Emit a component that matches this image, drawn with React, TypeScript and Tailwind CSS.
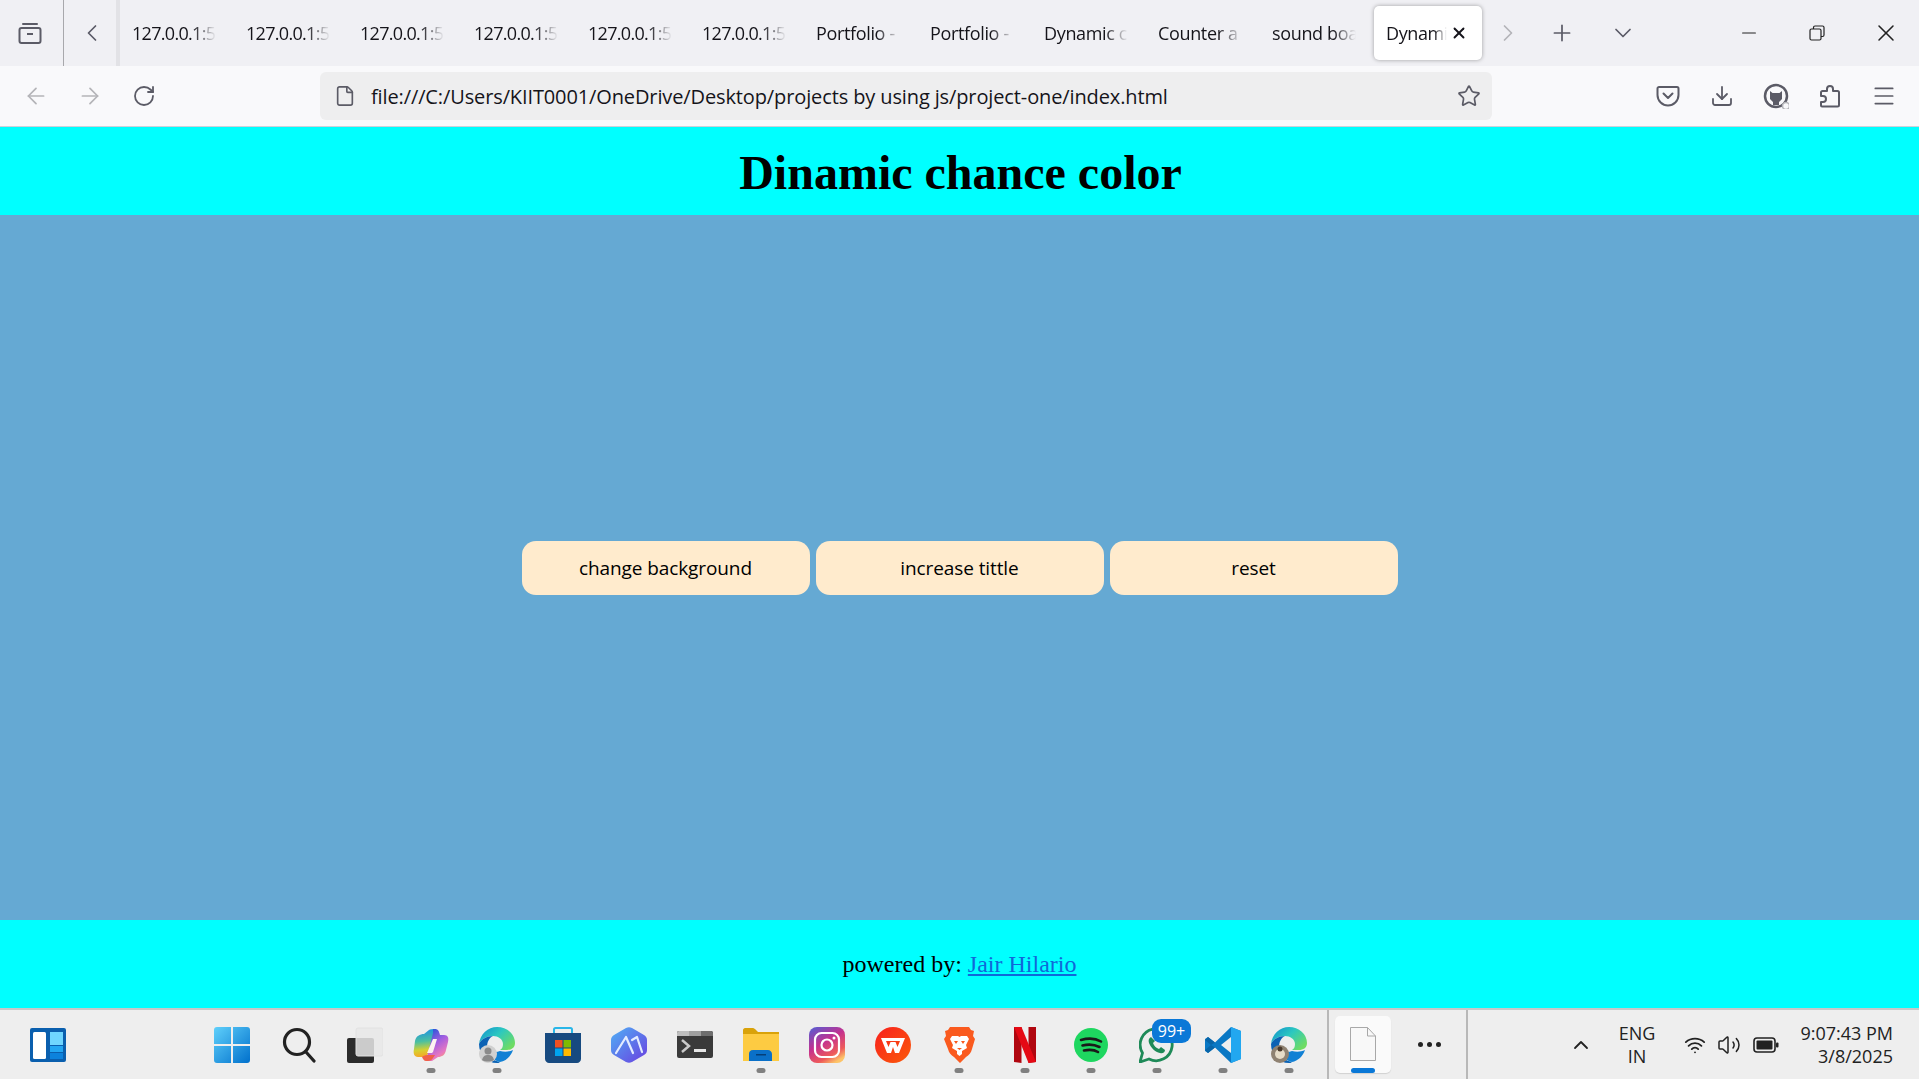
import { ArrowLeft, ArrowRight, ChevronDown, ChevronLeft, ChevronRight, ChevronUp, Download, File, Menu, Minus, Plus, RotateCw, Star, Volume2, Wifi, X } from 'lucide-react'
import type { ReactNode } from 'react'

const chromeFont = "font-['Open_Sans','Noto_Sans',sans-serif]"

const tabs = [
  "127.0.0.1:5", "127.0.0.1:5", "127.0.0.1:5", "127.0.0.1:5", "127.0.0.1:5", "127.0.0.1:5",
  "Portfolio -", "Portfolio -", "Dynamic c", "Counter a", "sound boa",
]

function CopilotIcon() {
  return (
    <svg width="36" height="36" viewBox="0 0 36 36">
      <defs>
        <linearGradient id="cop1" x1="0.3" y1="0" x2="0.4" y2="1">
          <stop offset="0" stopColor="#1a8fe8" />
          <stop offset="0.45" stopColor="#4cc0a0" />
          <stop offset="0.75" stopColor="#d6d030" />
          <stop offset="1" stopColor="#f7a525" />
        </linearGradient>
        <linearGradient id="cop2" x1="0.2" y1="0" x2="0.7" y2="1">
          <stop offset="0" stopColor="#1f55d8" />
          <stop offset="0.45" stopColor="#a45ee0" />
          <stop offset="0.8" stopColor="#e878c0" />
          <stop offset="1" stopColor="#f8a060" />
        </linearGradient>
      </defs>
      <path d="M2 14C3 9 7 7 11 7l5-4c1-1 3-1 7-1L15 27c-1 2-3 3-5 3H5c-4 0-5-4-4-8z" fill="url(#cop1)" />
      <path d="M20 2h2c3 0 4 2 5 6h4c4 0 5 3 4 7l-2 8c-1 5-4 7-8 7l-6 4h-6l7-28z" fill="url(#cop2)" />
      <path d="M9 30c1-1 3-2 5-2h8l-2 3c-1 2-3 3-5 3h-2c-2 0-3-2-4-4z" fill="#f0604a" />
      <path d="M20 12h4l-4 13c-1 1-1 1-2 1h-4z" fill="#fdf3f0" />
    </svg>
  )
}

function EdgeIcon({ id, children }: { id: string; children: ReactNode }) {
  return (
    <svg width="36" height="36" viewBox="0 0 36 36">
      <defs>
        <linearGradient id={id} x1="0" y1="0" x2="1" y2="0.7">
          <stop offset="0" stopColor="#0f8ccf" />
          <stop offset="0.5" stopColor="#2cc8c0" />
          <stop offset="1" stopColor="#6fdc62" />
        </linearGradient>
      </defs>
      <path d="M0 17C1 7 9 0 18 0c10 0 18 7 18 16 0 5-4 7-8 7h-7c2-1 3-3 3-6 0-5-5-8-10-8C8 9 2 12 0 17z" fill={`url(#${id})`} />
      <path d="M0 17c2-5 8-8 14-8-4 2-6 6-6 11 0 7 5 14 13 15-1 1-2 1-3 1C8 36 0 28 0 17z" fill="#0c62b4" />
      <path d="M21 24c4 1 9 1 13-1-2 6-7 11-13 12-6-1-10-6-11-12 3 2 7 3 11 1z" fill="#1180d4" />
      {children}
    </svg>
  )
}

function StoreIcon() {
  return (
    <svg width="36" height="36" viewBox="0 0 36 36">
      <path d="M9 7V2.5C9 1.5 9.5 1 10.5 1h15c1 0 1.500.5 1.500 1.500V7" fill="none" stroke="#29b6e8" strokeWidth="2" />
      <path d="M0 6h36v26c0 2-2 4-4 4H4c-2 0-4-2-4-4z" fill="#174a80" />
      <rect x="10" y="13" width="7.5" height="7.5" fill="#f25022" />
      <rect x="18.5" y="13" width="7.5" height="7.5" fill="#7fba00" />
      <rect x="10" y="21.5" width="7.5" height="7.5" fill="#00a4ef" />
      <rect x="18.5" y="21.5" width="7.5" height="7.5" fill="#ffb900" />
    </svg>
  )
}

function ArcIcon() {
  return (
    <svg width="36" height="36" viewBox="0 0 36 36">
      <defs>
        <linearGradient id="arc" x1="0" y1="0" x2="1" y2="1">
          <stop offset="0" stopColor="#4fb0f5" />
          <stop offset="1" stopColor="#6a3fe0" />
        </linearGradient>
      </defs>
      <path d="M15 1c2-1 4-1 6 0l12 7c2 1 3 3 3 5v10c0 2-1 4-3 5l-12 7c-2 1-4 1-6 0L3 28c-2-1-3-3-3-5V13c0-2 1-4 3-5z" fill="url(#arc)" />
      <path d="M5 26 15 10l7 16M21 13l5-3 5 15" fill="none" stroke="#e3ecff" strokeWidth="2.2" strokeLinecap="round" strokeLinejoin="round" />
    </svg>
  )
}

function TerminalIcon() {
  return (
    <svg width="36" height="28" viewBox="0 0 36 28">
      <rect width="36" height="27" rx="2" fill="#3a3a3a" />
      <path d="M2 0h10v5H0V2c0-1 1-2 2-2z" fill="#bdbdbd" />
      <rect x="12" width="12" height="5" fill="#a0a0a0" />
      <path d="M24 0h10c1 0 2 1 2 2v3H24z" fill="#6e6e6e" />
      <path d="m5 9 7 6-7 6" fill="none" stroke="#c9c9c9" strokeWidth="2.5" />
      <rect x="17" y="18" width="12" height="3" fill="#e6e6e6" />
    </svg>
  )
}

function FolderIcon() {
  return (
    <svg width="36" height="36" viewBox="0 0 36 36">
      <path d="M0 3c0-1 1-2 2-2h8c1 0 2 1 3 2l2 2h21v4H0z" fill="#d9a20a" />
      <path d="M0 7h36v27H0z" fill="#fdcb42" />
      <path d="M6 34v-7c0-2 1-4 4-4h15c2 0 4 2 4 4v7z" fill="#0a70c8" />
      <rect x="13" y="27" width="10" height="1.5" fill="#053f78" />
    </svg>
  )
}

function InstagramIcon() {
  return (
    <svg width="36" height="36" viewBox="0 0 36 36">
      <defs>
        <linearGradient id="ig" x1="0.1" y1="0" x2="0.7" y2="1">
          <stop offset="0" stopColor="#5a5ad0" />
          <stop offset="0.45" stopColor="#c4318f" />
          <stop offset="0.8" stopColor="#ee5a5a" />
          <stop offset="1" stopColor="#fdc468" />
        </linearGradient>
      </defs>
      <rect width="36" height="36" rx="8" fill="url(#ig)" />
      <rect x="6" y="6" width="24" height="24" rx="6.5" fill="none" stroke="#fff" strokeWidth="2.2" />
      <circle cx="18" cy="18" r="5.5" fill="none" stroke="#fff" strokeWidth="2.2" />
      <circle cx="25" cy="11" r="1.5" fill="#fff" />
    </svg>
  )
}

function WpsIcon() {
  return (
    <svg width="36" height="36" viewBox="0 0 36 36">
      <defs>
        <linearGradient id="wps" x1="0" y1="0" x2="1" y2="1">
          <stop offset="0" stopColor="#f8201e" />
          <stop offset="1" stopColor="#fb5a0a" />
        </linearGradient>
      </defs>
      <circle cx="18" cy="18" r="18" fill="url(#wps)" />
      <path d="M6 11h24l-6 15h-4l-2-6-2 6h-4zm5 3 2.5 6 2-5h5l2 5 2.5-6z" fill="#fff" fillRule="evenodd" />
    </svg>
  )
}

function BraveIcon() {
  return (
    <svg width="31" height="36" viewBox="0 0 31 36">
      <path d="M6 0h19l2 3 3 1-1 5 2 3-3 10c-1 4-3 6-6 8l-6 6-6-6c-3-2-5-4-6-8L0 12l2-3-1-5 3-1z" fill="#fa5a1e" />
      <path d="M8 9h6l1.5 1L17 9h6l2 3-3 6 1 3-5 3v3l-2.5 2L13 27v-3l-5-3 1-3-3-6z" fill="#fff" />
      <path d="M10 14h4l-2 3zM21 14h-4l2 3zM13 21h5l-2.5 2z" fill="#fa5a1e" />
    </svg>
  )
}

function NetflixIcon() {
  return (
    <svg width="22" height="36" viewBox="0 0 22 36">
      <path d="M0 0h7.5v36L0 35z" fill="#b0060f" />
      <path d="M14.5 0H22v35l-7.5 1z" fill="#b0060f" />
      <path d="M0 0h7.5L22 35l-7.5 1z" fill="#e50914" />
    </svg>
  )
}

function SpotifyIcon() {
  return (
    <svg width="34" height="34" viewBox="0 0 34 34">
      <circle cx="17" cy="17" r="17" fill="#1ed760" />
      <path d="M7 12c7-2 14-2 20 1.500M8.500 17.500c6-1.500 12-1 17 1.500M10 22.500c5-1 10-1 14 1.500" fill="none" stroke="#1a1a1a" strokeWidth="2.6" strokeLinecap="round" />
    </svg>
  )
}

function WhatsappIcon() {
  return (
    <svg width="36" height="36" viewBox="0 0 36 36">
      <path d="M1 35l2.500-9A16 16 0 1 1 10 32z" fill="none" stroke="#1e8a58" strokeWidth="2.8" strokeLinejoin="round" />
      <path d="M12 10c-2 1-3 3-2 6 2 5 6 9 11 10 3 1 5-1 5-3l-4-3-2 2c-3-1-5-3-6-6l2-2z" fill="#1e8a58" />
    </svg>
  )
}

function VscodeIcon() {
  return (
    <svg width="36" height="36" viewBox="0 0 36 36">
      <path d="M26 0 10 15.500 3 10 0 12v12l3 2 7-5.500L26 36l10-4V4zM26 10v16l-10-8z" fill="#0a78c4" fillRule="evenodd" />
      <path d="M26 0l10 4v28l-10 4z" fill="#22a7f0" />
      <path d="M3 10l7 5.500L6 18 0 13zM6 18l4 2.500L3 26l-3-3z" fill="#0865a8" />
    </svg>
  )
}

function TaskSlot({ dot, children }: { dot?: boolean; children: ReactNode }) {
  return (
    <div className="relative flex h-full w-[66px] shrink-0 items-center justify-center">
      {children}
      {dot && <div className="absolute bottom-[6px] left-1/2 h-[5px] w-[9px] -translate-x-1/2 rounded-full bg-[#808080]" />}
    </div>
  )
}

export default function App() {
  return (
    <div className="flex h-[1079px] w-full flex-col overflow-hidden bg-white">
      {/* Tab strip */}
      <div className={`flex h-[66px] shrink-0 items-center bg-[#f0f0f4] text-[18px] text-[#15141a] ${chromeFont}`}>
        <div className="flex h-full w-[64px] shrink-0 items-center justify-center border-r border-[#a8a8ac] pr-[4px]">
          <svg width="24" height="24" viewBox="0 0 24 24" fill="none" stroke="#5b5b66" strokeWidth="2">
            <path d="M5 3h14" strokeLinecap="round" />
            <rect x="1.5" y="7" width="21" height="15" rx="2" />
            <path d="M9 13h6" />
          </svg>
        </div>
        <div className="flex h-full w-[56px] shrink-0 items-center justify-center border-r-[4px] border-[#e2e2e6] pl-[3px]">
          <ChevronLeft size={28} strokeWidth={1.5} color="#5b5b66" />
        </div>
        {tabs.map((t, i) => (
          <div key={i} className="flex h-full w-[114px] shrink-0 items-center px-3">
            <span className={`w-[84px] overflow-hidden whitespace-nowrap [mask-image:linear-gradient(to_right,black_72%,transparent_100%)] ${i < 6 ? "tracking-[-0.7px]" : "tracking-[-0.35px]"}`}>{t}</span>
          </div>
        ))}
        <div className="flex h-[54px] w-[108px] shrink-0 items-center justify-between rounded-[5px] bg-white pl-3 pr-[14px] shadow-[0_0_4px_rgba(0,0,0,0.35)]">
          <span className="w-[64px] overflow-hidden whitespace-nowrap tracking-[-0.4px] [mask-image:linear-gradient(to_right,black_75%,transparent_95%)]">Dynami</span>
          <X size={18} strokeWidth={2.5} color="#15141a" />
        </div>
        <div className="flex w-[42px] shrink-0 justify-end pr-[2px]">
          <ChevronRight size={28} strokeWidth={1.5} color="#b4b4b8" />
        </div>
        <div className="flex w-[74px] shrink-0 justify-center pl-[2px]">
          <Plus size={26} strokeWidth={1.6} color="#5b5b66" />
        </div>
        <div className="flex w-[50px] shrink-0 justify-center">
          <ChevronDown size={28} strokeWidth={1.5} color="#5b5b66" />
        </div>
        <div className="flex w-[112px] shrink-0 justify-end">
          <Minus size={22} strokeWidth={1.2} color="#222" />
        </div>
        <div className="flex w-[80px] shrink-0 justify-end">
          <svg width="22" height="22" viewBox="0 0 22 22" fill="none" stroke="#222" strokeWidth="1.2" className="mr-[12px]">
            <rect x="4" y="7" width="11" height="11" rx="1.5" />
            <path d="M7.5 7V5.5C7.5 4.500 8 4 9 4h7.500C17.500 4 18 4.500 18 5.500V13c0 1-.5 1.500-1.500 1.500H15" />
          </svg>
        </div>
        <div className="flex w-[70px] shrink-0 justify-end pr-[10px]">
          <X size={28} strokeWidth={1.3} color="#222" />
        </div>
      </div>

      {/* Toolbar */}
      <div className={`flex h-[61px] shrink-0 items-center border-b border-[#cfcfd8] bg-[#f9f9fb] ${chromeFont}`}>
        <div className="flex w-[72px] shrink-0 justify-center"><ArrowLeft size={26} strokeWidth={1.6} color="#b4b4b8" /></div>
        <div className="flex w-[36px] shrink-0 justify-center"><ArrowRight size={26} strokeWidth={1.6} color="#b4b4b8" /></div>
        <div className="flex w-[72px] shrink-0 justify-center"><RotateCw size={24} strokeWidth={1.8} color="#5b5b66" /></div>
        <div className="ml-[140px] flex h-[48px] w-[1172px] shrink-0 items-center rounded-[6px] bg-[#eeeeef] pl-[14px] pr-[11px]">
          <File size={22} strokeWidth={1.8} color="#5b5b66" />
          <span className="ml-[15px] flex-1 whitespace-nowrap pt-[1px] text-[20px] tracking-[-0.12px] text-[#15141a]">file:///C:/Users/KIIT0001/OneDrive/Desktop/projects by using js/project-one/index.html</span>
          <Star size={24} strokeWidth={1.7} color="#5b5b66" />
        </div>
        <div className="ml-[149px] flex w-[54px] shrink-0 justify-center">
          <svg width="24" height="24" viewBox="0 0 24 24" fill="none" stroke="#5b5b66" strokeWidth="2" strokeLinecap="round" strokeLinejoin="round">
            <path d="M3 3h18c.8 0 1.5.7 1.5 1.5V11c0 6-5 10.5-10.5 10.5S1.500 17 1.500 11V4.500C1.500 3.700 2.200 3 3 3z" />
            <path d="m7.500 9.500 4.500 4.500 4.500-4.500" />
          </svg>
        </div>
        <div className="flex w-[54px] shrink-0 justify-center"><Download size={24} strokeWidth={1.8} color="#5b5b66" /></div>
        <div className="relative flex w-[54px] shrink-0 justify-center">
          <svg width="26" height="26" viewBox="0 0 26 26" fill="none">
            <circle cx="13" cy="13" r="11" stroke="#5b5b66" strokeWidth="2.5" />
            <path d="M7 8l2.500 2h7L19 8v8l-3 3v3h-6v-3l-3-3z" fill="#5b5b66" />
            <circle cx="23" cy="23" r="3.5" fill="#f9f9fb" stroke="#b4b4b8" strokeWidth="1.6" />
          </svg>
        </div>
        <div className="flex w-[54px] shrink-0 justify-center">
          <svg width="24" height="24" viewBox="0 0 24 24" fill="none" stroke="#5b5b66" strokeWidth="2" strokeLinejoin="round">
            <path d="M4 22.500h15.500c.8 0 1.500-.7 1.500-1.500V8.500c0-.8-.7-1.500-1.500-1.500H15V5a3 3 0 0 0-6 0v2H4.500C3.700 7 3 7.700 3 8.500V12h2a3 3 0 0 1 0 6H3v3.500c0 .5.5 1 1 1z" />
          </svg>
        </div>
        <div className="flex w-[54px] shrink-0 justify-center"><Menu size={26} strokeWidth={1.6} color="#5b5b66" /></div>
      </div>

      {/* Page */}
      <header className="flex h-[88px] shrink-0 items-center justify-center bg-[#00ffff] pl-[2px] pt-[3px]">
        <h1 className="font-['Liberation_Serif',serif] text-[48px] font-bold text-black">Dinamic chance color</h1>
      </header>
      <main className="flex flex-1 items-center justify-center gap-[6px] bg-[#65a9d3]">
        {["change background", "increase tittle", "reset"].map((label) => (
          <button key={label} className={`h-[54px] w-[288px] rounded-[14px] bg-[#ffebcd] pt-[1px] text-[19px] tracking-[-0.1px] text-black ${chromeFont}`}>{label}</button>
        ))}
      </main>
      <footer className="flex h-[88px] shrink-0 items-center justify-center bg-[#00ffff] font-['Liberation_Serif',serif] text-[24px] text-black">
        <span>powered by: <a href="#" className="text-[#1068d8] underline">Jair Hilario</a></span>
      </footer>

      {/* Windows taskbar */}
      <div className={`flex h-[71px] shrink-0 items-center border-t-2 border-[#c8c8c8] bg-[#eeeeee] ${chromeFont}`}>
        <div className="flex w-[200px] shrink-0 pl-[30px]">
          <svg width="36" height="34" viewBox="0 0 36 34">
            <rect width="36" height="34" rx="2" fill="#0a5fae" />
            <rect x="3" y="4" width="13" height="27" rx="1.5" fill="#fff" />
            <rect x="20" y="4" width="13" height="13" fill="#6fd6ff" />
            <rect x="20" y="18" width="13" height="6" fill="#22a6f2" />
            <rect x="20" y="25" width="13" height="6" fill="#0c82dc" />
          </svg>
        </div>
        <TaskSlot>
          <svg width="36" height="36" viewBox="0 0 36 36" className="-ml-[2px]">
            <defs>
              <linearGradient id="win" x1="0" y1="0" x2="1" y2="1">
                <stop offset="0" stopColor="#5fd0fb" />
                <stop offset="1" stopColor="#0070cc" />
              </linearGradient>
            </defs>
            <path d="M0 3c0-2 1-3 3-3h14v17H0zM19 0h14c2 0 3 1 3 3v14H19zM0 19h17v17H3c-2 0-3-1-3-3zM19 19h17v14c0 2-1 3-3 3H19z" fill="url(#win)" />
          </svg>
        </TaskSlot>
        <TaskSlot>
          <svg width="34" height="36" viewBox="0 0 34 36" fill="none" stroke="#222" strokeWidth="3.2" strokeLinecap="round">
            <circle cx="15" cy="15" r="12.5" />
            <path d="m24 25 8 9" />
          </svg>
        </TaskSlot>
        <TaskSlot>
          <svg width="36" height="36" viewBox="0 0 36 36">
            <rect y="11" width="27" height="25" rx="2" fill="#2b2b2b" />
            <rect x="9" y="1" width="27" height="28" rx="2" fill="#e8e8e8" fillOpacity="0.85" stroke="#e2e2e2" />
          </svg>
        </TaskSlot>
        <TaskSlot dot><CopilotIcon /></TaskSlot>
        <TaskSlot dot>
          <EdgeIcon id="edge1">
            <circle cx="9" cy="27" r="9" fill="#d0d0d0" />
            <circle cx="9" cy="24" r="3.5" fill="#8a8a8a" />
            <path d="M3 33c1-4 3-5 6-5s5 1 6 5c-3 2-9 2-12 0z" fill="#8a8a8a" />
          </EdgeIcon>
        </TaskSlot>
        <TaskSlot><StoreIcon /></TaskSlot>
        <TaskSlot><ArcIcon /></TaskSlot>
        <TaskSlot><TerminalIcon /></TaskSlot>
        <TaskSlot dot><FolderIcon /></TaskSlot>
        <TaskSlot><InstagramIcon /></TaskSlot>
        <TaskSlot><WpsIcon /></TaskSlot>
        <TaskSlot dot><BraveIcon /></TaskSlot>
        <TaskSlot dot><NetflixIcon /></TaskSlot>
        <TaskSlot dot><SpotifyIcon /></TaskSlot>
        <TaskSlot dot>
          <WhatsappIcon />
          <div className="absolute left-[28px] top-[9px] flex h-[24px] w-[39px] items-center justify-center rounded-[9px] bg-[#0a78d7] text-[16px] text-white">99+</div>
        </TaskSlot>
        <TaskSlot dot><VscodeIcon /></TaskSlot>
        <TaskSlot dot>
          <EdgeIcon id="edge2">
            <circle cx="9" cy="27" r="9" fill="#8f8272" />
            <circle cx="9" cy="27" r="5" fill="#e6dcc8" />
            <circle cx="9" cy="22" r="2.5" fill="#4a3a2c" />
          </EdgeIcon>
        </TaskSlot>
        <div className="ml-[5px] h-full w-[2px] shrink-0 bg-[#b8b8b8]" />
        <div className="relative ml-[6px] flex h-[57px] w-[56px] shrink-0 items-start justify-center rounded-[5px] bg-[#fafafa] pt-[11px] shadow-[0_1px_1px_rgba(0,0,0,0.12)]">
          <svg width="26" height="34" viewBox="0 0 26 34" fill="#f8f8f8" stroke="#a8a8a8" strokeWidth="1">
            <path d="M.5.5h17L25.5 9v24.5H.5z" />
            <path d="M17.5.5V9h8" fill="none" />
          </svg>
          <div className="absolute bottom-0 left-1/2 h-[5px] w-[24px] -translate-x-1/2 rounded-full bg-[#0a78d7]" />
        </div>
        <div className="flex w-[75px] shrink-0 items-center justify-center gap-[4px] pl-[2px]">
          <div className="h-[5px] w-[5px] rounded-full bg-[#222]" />
          <div className="h-[5px] w-[5px] rounded-full bg-[#222]" />
          <div className="h-[5px] w-[5px] rounded-full bg-[#222]" />
        </div>
        <div className="h-full w-[2px] shrink-0 bg-[#b8b8b8]" />
        <div className="ml-[101px] flex w-[24px] shrink-0 justify-center"><ChevronUp size={26} strokeWidth={1.8} color="#222" /></div>
        <div className="ml-[19px] flex w-[50px] shrink-0 flex-col items-center text-[18px] leading-[23px] text-[#222]">
          <span>ENG</span>
          <span>IN</span>
        </div>
        <div className="ml-[16px] flex w-[34px] shrink-0 justify-center"><Wifi size={22} strokeWidth={2} color="#222" /></div>
        <div className="ml-[2px] flex w-[30px] shrink-0 justify-center"><Volume2 size={24} strokeWidth={1.5} color="#222" /></div>
        <div className="ml-[7px] flex w-[30px] shrink-0 justify-center">
          <svg width="26" height="18" viewBox="0 0 26 18">
            <rect x="1" y="2" width="21" height="14" rx="3" fill="none" stroke="#222" strokeWidth="1.6" />
            <rect x="3.5" y="4.5" width="16" height="9" rx="1" fill="#222" />
            <rect x="23" y="6.5" width="2.5" height="5" rx="1" fill="#222" />
          </svg>
        </div>
        <div className="ml-[22px] flex w-[90px] shrink-0 flex-col items-end text-[18px] leading-[23px] text-[#222]">
          <span className="whitespace-nowrap">9:07:43 PM</span>
          <span>3/8/2025</span>
        </div>
      </div>
    </div>
  )
}
